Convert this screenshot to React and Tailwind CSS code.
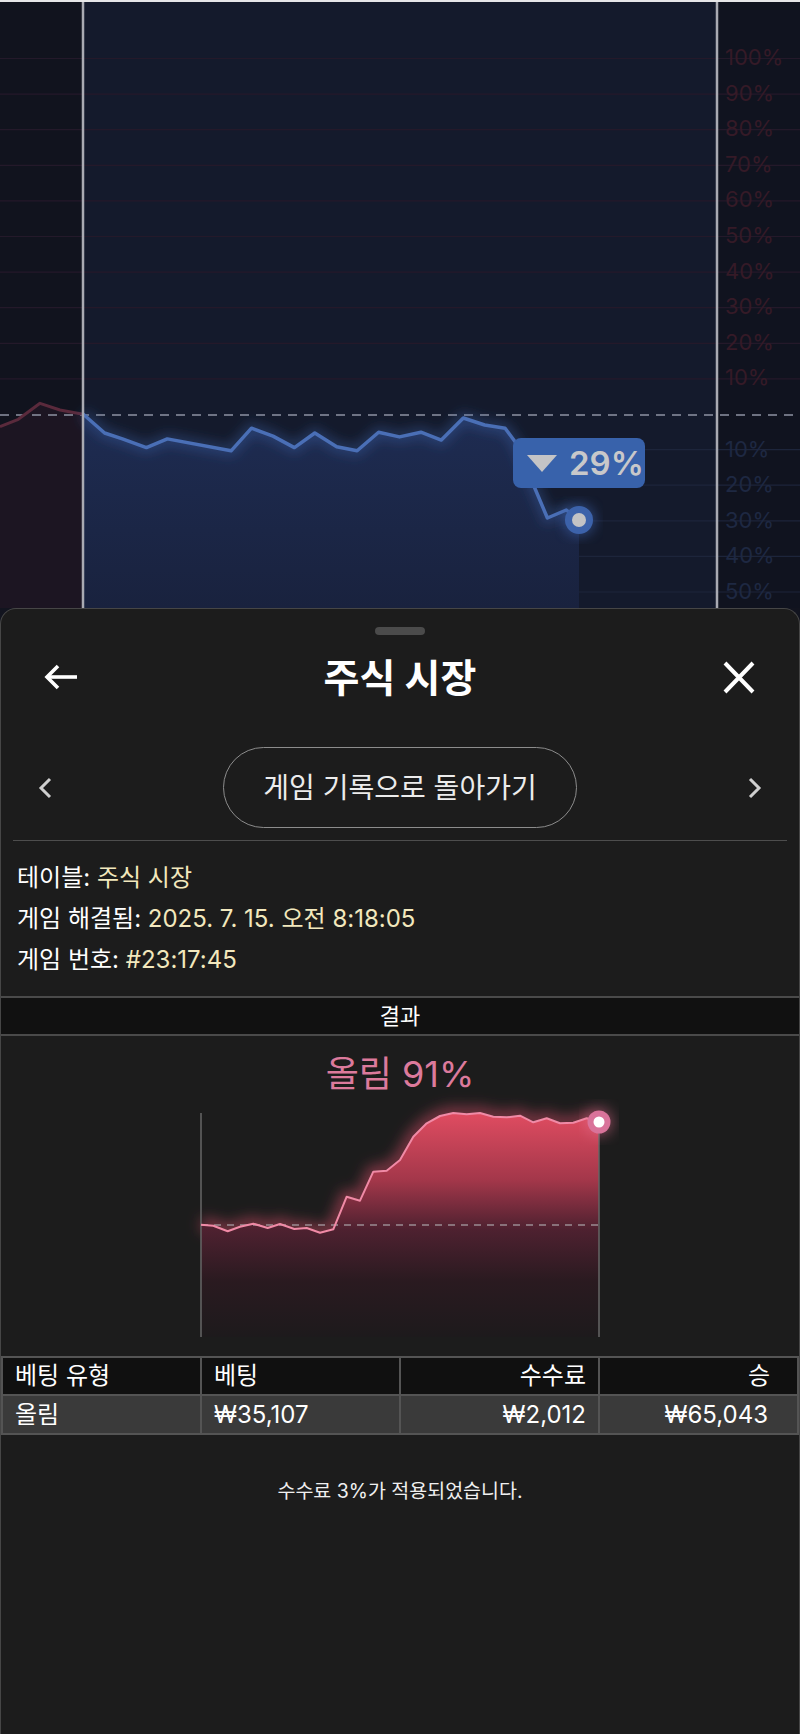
import React from "react";

const BLUE_PTS = [
  [83, 414], [104.6, 433], [122.4, 438.9], [146.4, 447.6], [167.3, 438.9],
  [231.1, 450.8], [251.5, 428.2], [273, 436.1], [294.4, 447.6], [314.8, 433],
  [336.7, 446.8], [357.1, 450.8], [378.6, 432.2], [399.5, 436.9], [420.9, 432.2],
  [441.3, 440.1], [463.3, 418], [484.7, 425], [505.1, 428.2], [515.3, 442],
  [535.7, 490.3], [547.4, 518], [566.3, 510], [579, 520],
];

const RED_PTS = [[0, 426.7], [18.3, 419.3], [40, 403.3], [60, 410], [83, 414.3]];

const RESULT_PTS = [
  [0, 111.7], [12.3, 112.7], [26.7, 118.3], [39, 113.7], [52.3, 110.7],
  [66.7, 115], [79, 111], [93.3, 116], [105.7, 115], [119, 119.7],
  [132.3, 116.3], [145.7, 83.7], [159, 87.7], [172.3, 58.7], [185.7, 57.7],
  [199, 47], [212.3, 23.7], [225.7, 10.3], [239, 3], [252.3, 0],
  [265.7, 1.3], [279, 0], [292.3, 3.7], [305.7, 4.3], [319, 2.7],
  [332.3, 9.3], [345.7, 5.3], [359, 10.3], [372.3, 9.7], [385.7, 5.3], [398, 9.3],
];

const toLine = (pts) => pts.map(([x, y], i) => `${i ? "L" : "M"}${x} ${y}`).join(" ");

const UP_GRID = [0, 1, 2, 3, 4, 5, 6, 7, 8, 9].map((i) => 58.5 + i * 35.6);
const DOWN_GRID = [449.6, 485.2, 520.8, 556.4, 592];

const UP_LABELS = ["100%", "90%", "80%", "70%", "60%", "50%", "40%", "30%", "20%", "10%"];
const DOWN_LABELS = ["10%", "20%", "30%", "40%", "50%"];

const MarketChart = () => {
  const blue = toLine(BLUE_PTS);
  const red = toLine(RED_PTS);
  return (
    <div className="relative h-[606px] overflow-hidden">
      <svg width="800" height="606" viewBox="0 2 800 606" className="block">
        <defs>
          <linearGradient id="blueFill" x1="0" y1="414" x2="0" y2="608" gradientUnits="userSpaceOnUse">
            <stop offset="0" stopColor="#1e2c52" />
            <stop offset="1" stopColor="#19223e" />
          </linearGradient>
          <filter id="soft" x="-20%" y="-20%" width="140%" height="140%">
            <feGaussianBlur stdDeviation="6" />
          </filter>
          <filter id="softer" x="-50%" y="-5%" width="200%" height="110%">
            <feGaussianBlur stdDeviation="7" />
          </filter>
        </defs>

        <rect x="0" y="0" width="83" height="608" fill="#11131e" />
        <rect x="83" y="0" width="634" height="608" fill="#141a2c" />
        <rect x="717" y="0" width="83" height="608" fill="#10131f" />

        {UP_GRID.map((y) => (
          <line key={y} x1="0" x2="800" y1={y} y2={y} stroke="#24192a" strokeWidth="1.2" />
        ))}
        {DOWN_GRID.map((y) => (
          <line key={y} x1="0" x2="800" y1={y} y2={y} stroke="#1d253b" strokeWidth="1.2" />
        ))}

        <path d={`${red} L83 608 L0 608 Z`} fill="#1c1522" />
        <path d={`${blue} L579 608 L83 608 Z`} fill="url(#blueFill)" />

        <line x1="0" x2="800" y1="415" y2="415" stroke="#8d92a3" strokeWidth="1.6" strokeDasharray="9 7" />

        <path d={red} fill="none" stroke="#5a2a3c" strokeWidth="3" strokeLinejoin="round" />
        <path d={blue} fill="none" stroke="#3f66b0" strokeWidth="10" strokeOpacity="0.4" filter="url(#soft)" />
        <path d={blue} fill="none" stroke="#4a6fb6" strokeWidth="3.5" strokeLinejoin="round" />

        {[83, 717].map((x) => (
          <g key={x}>
            <line x1={x} x2={x} y1="0" y2="608" stroke="#ffffff" strokeOpacity="0.22" strokeWidth="16" filter="url(#softer)" />
            <line x1={x} x2={x} y1="0" y2="608" stroke="#a9aab2" strokeWidth="2.5" />
          </g>
        ))}

        <circle cx="579" cy="520" r="17" fill="#3c62aa" opacity="0.5" filter="url(#soft)" />
        <circle cx="579" cy="520" r="14" fill="#3c62aa" />
        <circle cx="579" cy="520" r="7" fill="#c3c3c5" />
      </svg>

      <div className="absolute right-0 top-0 w-[75px] pt-[38px] text-[22px] leading-[35.6px]">
        {UP_LABELS.map((l) => (
          <div key={l} className="text-[#351a27]">{l}</div>
        ))}
        <div className="h-[35.6px]" />
        {DOWN_LABELS.map((l) => (
          <div key={"d" + l} className="text-[#1e2842]">{l}</div>
        ))}
      </div>

      <div className="absolute left-[513px] top-[436px] flex h-[50px] w-[132px] items-center gap-[12px] rounded-[8px] bg-[#3862ab] pl-[14px]">
        <svg width="30" height="17" viewBox="0 0 30 17">
          <path d="M0 0H30L15 17Z" fill="#c4c4c6" />
        </svg>
        <span className="text-[33px] font-semibold leading-none text-[#c8c8ca]">29%</span>
      </div>
    </div>
  );
};

const ResultChart = () => {
  const line = toLine(RESULT_PTS);
  return (
    <div className="mx-auto h-[224px] w-[398px]">
      <svg width="398" height="224" viewBox="0 0 398 224" overflow="visible" className="block">
        <defs>
          <linearGradient id="redFill" x1="0" y1="0" x2="0" y2="224" gradientUnits="userSpaceOnUse">
            <stop offset="0" stopColor="#e04c61" />
            <stop offset="0.3" stopColor="#a3374a" />
            <stop offset="0.52" stopColor="#4e2130" />
            <stop offset="0.75" stopColor="#2a1a20" />
            <stop offset="1" stopColor="#1d1a1c" />
          </linearGradient>
          <filter id="glow" x="-20%" y="-30%" width="140%" height="160%">
            <feGaussianBlur stdDeviation="7" />
          </filter>
        </defs>
        <path d={line} fill="none" stroke="#e0506c" strokeOpacity="0.55" strokeWidth="12" filter="url(#glow)" />
        <path d={`${line} L398 224 L0 224 Z`} fill="url(#redFill)" />
        <line x1="0" x2="0" y1="0" y2="224" stroke="#666" strokeWidth="1.5" />
        <line x1="398" x2="398" y1="0" y2="224" stroke="#666" strokeWidth="1.5" />
        <line x1="0" x2="398" y1="112" y2="112" stroke="#9b8c92" strokeWidth="1.5" strokeDasharray="7 6" />
        <path d={line} fill="none" stroke="#f08aa6" strokeWidth="2" strokeLinejoin="round" />
        <circle cx="398" cy="9" r="14" fill="#e0708f" opacity="0.5" filter="url(#glow)" />
        <circle cx="398" cy="9" r="11.5" fill="#d9739a" />
        <circle cx="398" cy="9" r="5.5" fill="#ffffff" />
      </svg>
    </div>
  );
};

const App = () => {
  return (
    <div className="flex min-h-[1734px] w-[800px] flex-col bg-[#12141f] font-['Inter','Noto_Sans_CJK_KR',sans-serif] text-white">
      <div className="h-[2px] bg-[#e6e6e8]" />
      <MarketChart />

      <div className="flex flex-1 flex-col rounded-t-[16px] border border-b-0 border-[#464646] bg-[#1c1c1c]">
        {/* HANDLE */}
        <div className="mx-auto mt-[18px] h-[8px] w-[50px] rounded-full bg-[#4b4b4b]" />

        {/* HEADER */}
        <div className="mt-[15px] flex h-[54px] items-center justify-between pl-[42px] pr-[44px]">
          <svg width="34" height="26" viewBox="0 0 34 26" fill="none" stroke="#fff" strokeWidth="3.6">
            <path d="M34 13H4" />
            <path d="M15 2 4 13l11 11" />
          </svg>
          <h2 className="text-[39px] font-bold leading-none">주식 시장</h2>
          <svg width="32" height="33" viewBox="0 0 32 33" fill="none" stroke="#fff" strokeWidth="4">
            <path d="M2 2l28 29M30 2 2 31" />
          </svg>
        </div>

        {/* NAV */}
        <div className="mt-[43px] flex items-center justify-between px-[37px]">
          <svg width="14" height="22" viewBox="0 0 14 22" fill="none" stroke="#cfcfcf" strokeWidth="3">
            <path d="M12 2 3 11l9 9" />
          </svg>
          <button className="flex h-[81px] w-[354px] items-center justify-center rounded-full border-[1.5px] border-[#8c8c8c] text-[28px] text-[#ececec]">
            게임 기록으로 돌아가기
          </button>
          <svg width="14" height="22" viewBox="0 0 14 22" fill="none" stroke="#cfcfcf" strokeWidth="3">
            <path d="M2 2l9 9-9 9" />
          </svg>
        </div>

        <div className="mx-[12px] mt-[12px] h-px bg-[#4d4d4d]" />

        {/* INFO */}
        <div className="pl-[16px] pt-[16px] text-[24px] leading-[41px]">
          <div>
            테이블: <span className="text-[#f2e8bd]">주식 시장</span>
          </div>
          <div>
            게임 해결됨: <span className="text-[#f2e8bd]">2025. 7. 15. 오전 8:18:05</span>
          </div>
          <div>
            게임 번호: <span className="text-[#f2e8bd]">#23:17:45</span>
          </div>
        </div>

        {/* RESULT */}
        <div className="mt-[16px] flex h-[40px] items-center justify-center border-y-2 border-[#4a4a4a] bg-[#111111] text-[22px]">
          결과
        </div>
        <div className="pb-[19px] pt-[18px]">
          <div className="text-center text-[36px] leading-[40px] text-[#dc7a9c]">올림 91%</div>
          <div className="mt-[19px]">
            <ResultChart />
          </div>
        </div>

        <table className="w-full table-fixed border-collapse text-[24px]">
          <thead>
            <tr className="bg-[#101010]">
              <th className="h-[38px] border-2 border-[#545454] px-[12px] text-left font-normal">베팅 유형</th>
              <th className="border-2 border-[#545454] px-[12px] text-left font-normal">베팅</th>
              <th className="border-2 border-[#545454] px-[12px] text-right font-normal">수수료</th>
              <th className="border-2 border-[#545454] pr-[27px] text-right font-normal">승</th>
            </tr>
          </thead>
          <tbody>
            <tr className="bg-[#3a3a3a]">
              <td className="h-[39px] border-2 border-[#545454] px-[12px]">올림</td>
              <td className="border-2 border-[#545454] px-[12px]">₩35,107</td>
              <td className="border-2 border-[#545454] px-[12px] text-right">₩2,012</td>
              <td className="border-2 border-[#545454] pr-[29px] text-right">₩65,043</td>
            </tr>
          </tbody>
        </table>

        <p className="mt-[44px] text-center text-[19.5px] leading-[24px] text-[#f0f0f0]">
          수수료 3%가 적용되었습니다.
        </p>
      </div>
    </div>
  );
};

export default App;
